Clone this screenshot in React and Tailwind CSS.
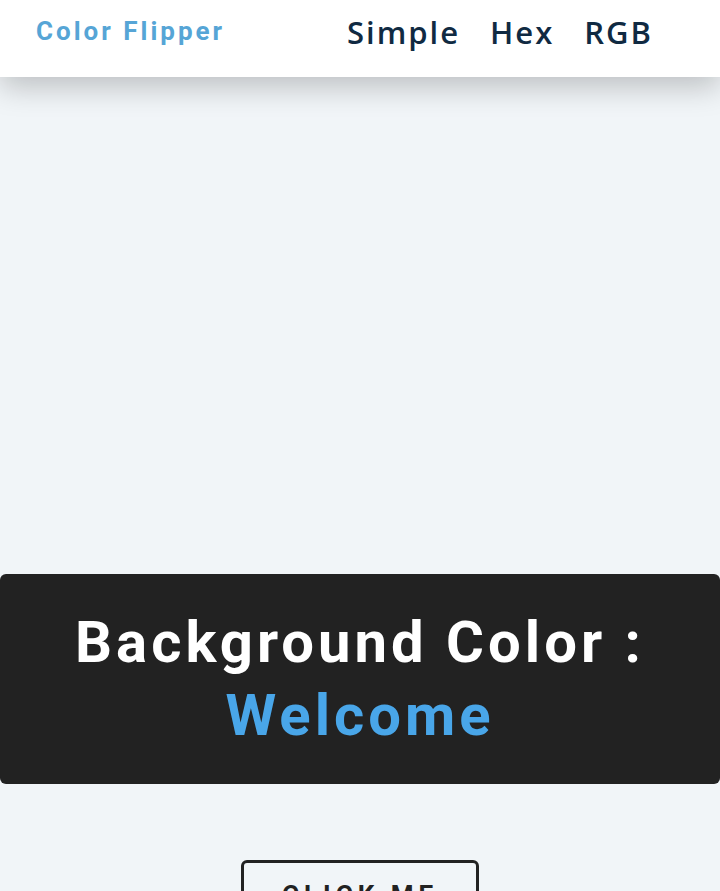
export default function App() {
  return (
    <div className="min-h-screen bg-[#f1f5f8]" style={{ fontFamily: "Roboto, sans-serif" }}>
      <nav className="h-[77px] bg-white shadow-[0_10px_30px_rgba(0,0,0,0.22)] flex items-center justify-between pl-9 pr-[67px] relative">
        <h4 className="text-[26px] font-bold tracking-[3px] text-[#56a5d6] -mt-[14px]">Color Flipper</h4>
        <ul className="flex gap-[30px] text-[#102a42] font-semibold text-[31px] tracking-[2px] -mt-[12px]" style={{ fontFamily: "'Open Sans', sans-serif" }}>
          <li>Simple</li>
          <li>Hex</li>
          <li>RGB</li>
        </ul>
      </nav>
      <main className="pt-[497px] flex flex-col items-center">
        <div className="w-full bg-[#222222] rounded-md py-[32px] text-center">
          <h2 className="text-[58px] leading-[73px] font-bold tracking-[4px] text-white">
            Background Color :
            <br />
            <span className="text-[#49a6e9]">Welcome</span>
          </h2>
        </div>
        <button className="mt-[76px] w-[238px] h-[70px] border-[3px] border-[#222222] rounded-md text-[#222222] text-[26px] font-bold tracking-[5px] uppercase">
          Click Me
        </button>
      </main>
    </div>
  );
}
